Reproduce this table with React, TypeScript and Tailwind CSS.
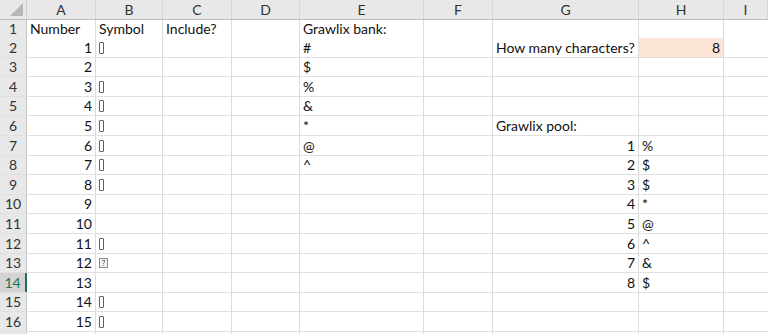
import React from "react";

type Cell = React.ReactNode;

const COLS = ["A", "B", "C", "D", "E", "F", "G", "H", "I"];
const WIDTHS = "27px 69px 67px 69px 68px 124px 69px 146px 85px 1fr";

const Box = ({ q }: { q?: boolean }) =>
  q ? (
    <span className="inline-flex items-center justify-center w-[9px] h-[10px] border border-[#8a8a8a] bg-[#f2f2f2] text-[8px] leading-none text-[#444] mb-[3px]">
      ?
    </span>
  ) : (
    <span className="inline-block w-[5px] h-[12px] border border-[#5f5f5f] rounded-[1px] mb-[2px]" />
  );

// each row: [A, B, C, D, E, F, G, H]
const rows: Cell[][] = [
  ["Number", "Symbol", "Include?", "", "Grawlix bank:", "", "", ""],
  [1, <Box />, "", "", "#", "", "How many characters?", 8],
  [2, "", "", "", "$", "", "", ""],
  [3, <Box />, "", "", "%", "", "", ""],
  [4, <Box />, "", "", "&", "", "", ""],
  [5, <Box />, "", "", "*", "", "Grawlix pool:", ""],
  [6, <Box />, "", "", "@", "", 1, "%"],
  [7, <Box />, "", "", "^", "", 2, "$"],
  [8, <Box />, "", "", "", "", 3, "$"],
  [9, "", "", "", "", "", 4, "*"],
  [10, "", "", "", "", "", 5, "@"],
  [11, <Box />, "", "", "", "", 6, "^"],
  [12, <Box q />, "", "", "", "", 7, "&"],
  [13, "", "", "", "", "", 8, "$"],
  [14, <Box />, "", "", "", "", "", ""],
  [15, <Box />, "", "", "", "", "", ""],
  ["", "", "", "", "", "", "", ""],
];

const DataCell = ({ value, row, col }: { value: Cell; row: number; col: number }) => {
  const isNum = typeof value === "number";
  const peach = row === 2 && col === 7;
  return (
    <div
      className={`border-r border-[#dcdcdc] flex items-end pb-[1px] overflow-visible whitespace-nowrap ${
        isNum ? "justify-end pr-[3px]" : "justify-start pl-[3px]"
      } ${peach ? "bg-[#fce4d6]" : "bg-white"}`}
    >
      {value}
    </div>
  );
};

export default function App() {
  return (
    <div
      className="w-[768px] h-[334px] overflow-hidden bg-white text-[#111] text-[14px] leading-[17px]"
      style={{ fontFamily: 'Lato, "Open Sans", sans-serif' }}
    >
      {/* column headers */}
      <div className="grid h-[20px] border-b border-[#bdbdbd] bg-[#e8e8e8]" style={{ gridTemplateColumns: WIDTHS }}>
        <div className="relative border-r border-[#cfcfcf]">
          <svg className="absolute right-[3px] bottom-[3px]" width="13" height="13" viewBox="0 0 13 13">
            <polygon points="13,0 13,13 0,13" fill="#b8b8b8" />
          </svg>
        </div>
        {COLS.map((c) => (
          <div key={c} className="border-r border-[#d6d6d6] flex items-center justify-center text-[#333] text-[14px]">
            {c}
          </div>
        ))}
      </div>

      {rows.map((r, i) => {
        const n = i + 1;
        const selected = n === 14;
        return (
          <div
            key={n}
            className={`grid ${n === 1 ? "h-[18px] border-b-2 border-[#c9c9c9]" : "h-[19.6px] border-b border-[#e0e0e0]"}`}
            style={{ gridTemplateColumns: WIDTHS }}
          >
            <div
              className={`flex items-end pb-[1px] justify-center text-[14px] ${
                selected
                  ? "bg-[#d3d3d3] text-[#217346] border-r-2 border-[#217346]"
                  : "bg-[#e8e8e8] text-[#333] border-r border-[#c6c6c6]"
              }`}
            >
              {n <= 16 ? n : ""}
            </div>
            {r.map((v, j) => (
              <DataCell key={j} value={v} row={n} col={j} />
            ))}
            <div className="bg-white" />
          </div>
        );
      })}
    </div>
  );
}
